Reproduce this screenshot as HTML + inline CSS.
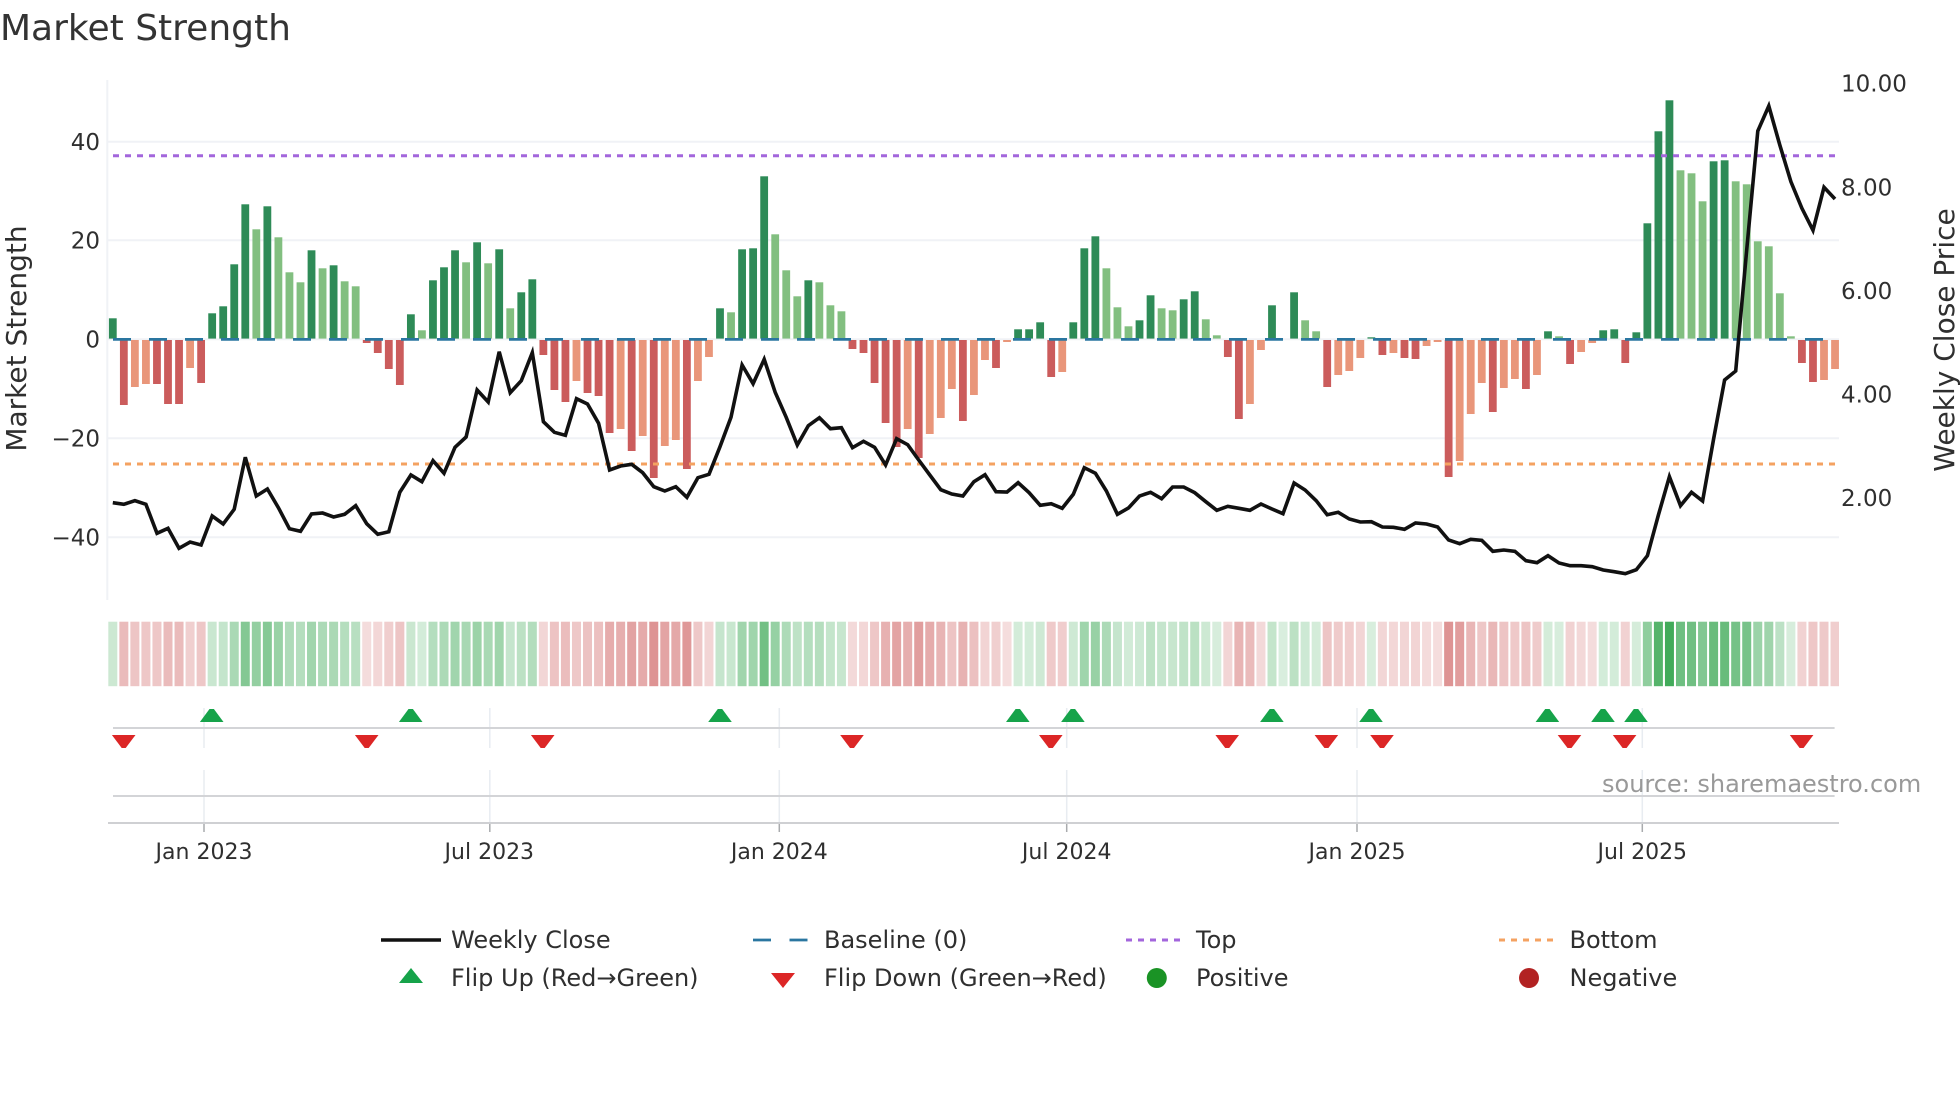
<!DOCTYPE html>
<html lang="en">
<head>
<meta charset="utf-8">
<title>Market Strength</title>
<style>
html,body{margin:0;padding:0;background:#fff;width:1960px;height:1102px;overflow:hidden}
svg{display:block}
text{font-family:"DejaVu Sans","Liberation Sans",sans-serif;fill:#2f2f2f}
.t{font-size:23px}
.l{font-size:24px}
</style>
</head>
<body>
<svg id="c" xmlns="http://www.w3.org/2000/svg" width="1960" height="1102" viewBox="0 0 1960 1102">
<rect width="1960" height="1102" fill="#fff"/>
<g stroke="#f0f2f6" stroke-width="2">
<line x1="107" x2="1839" y1="141.7" y2="141.7"/>
<line x1="107" x2="1839" y1="240.3" y2="240.3"/>
<line x1="107" x2="1839" y1="339.3" y2="339.3"/>
<line x1="107" x2="1839" y1="438.3" y2="438.3"/>
<line x1="107" x2="1839" y1="537.3" y2="537.3"/>
<line x1="107.3" x2="107.3" y1="80" y2="600"/>
</g>
<g id="heat"></g>
<g id="bars"></g>
<line x1="113" x2="1836" y1="155.7" y2="155.7" stroke="#a366dc" stroke-width="3" stroke-dasharray="6 6"/>
<line x1="113" x2="1836" y1="464" y2="464" stroke="#f4a261" stroke-width="3" stroke-dasharray="6 6"/>
<line x1="113" x2="1836" y1="339.4" y2="339.4" stroke="#2a76a0" stroke-width="2.8" stroke-dasharray="18 18"/>
<polyline id="close" fill="none" stroke="#111" stroke-width="3.6" stroke-linejoin="miter" stroke-miterlimit="4"/>

<g stroke="#e8ecf1" stroke-width="1.5" id="vg"></g>
<line x1="113" x2="1834.6" y1="728" y2="728" stroke="#d3d4d7" stroke-width="2"/>
<line x1="113" x2="1834.6" y1="796" y2="796" stroke="#d3d4d7" stroke-width="2"/>
<line x1="108" x2="1839" y1="823" y2="823" stroke="#cfd0d3" stroke-width="2"/>
<g id="tri"></g>

<text x="0" y="40" style="font-size:36px;fill:#333">Market Strength</text>
<text class="t" x="100" y="150" text-anchor="end">40</text>
<text class="t" x="100" y="248.5" text-anchor="end">20</text>
<text class="t" x="100" y="347.5" text-anchor="end">0</text>
<text class="t" x="100" y="446.5" text-anchor="end">−20</text>
<text class="t" x="100" y="545.5" text-anchor="end">−40</text>
<text class="t" x="1841" y="91.5">10.00</text>
<text class="t" x="1841" y="195.5">8.00</text>
<text class="t" x="1841" y="299">6.00</text>
<text class="t" x="1841" y="402.5">4.00</text>
<text class="t" x="1841" y="506">2.00</text>
<text transform="translate(26 338.5) rotate(-90)" text-anchor="middle" style="font-size:28px">Market Strength</text>
<text transform="translate(1954 340) rotate(-90)" text-anchor="middle" style="font-size:28px">Weekly Close Price</text>

<text class="t" x="204" y="859" text-anchor="middle" style="font-size:22px">Jan 2023</text>
<text class="t" x="489.3" y="859" text-anchor="middle" style="font-size:22px">Jul 2023</text>
<text class="t" x="779.3" y="859" text-anchor="middle" style="font-size:22px">Jan 2024</text>
<text class="t" x="1066.7" y="859" text-anchor="middle" style="font-size:22px">Jul 2024</text>
<text class="t" x="1357" y="859" text-anchor="middle" style="font-size:22px">Jan 2025</text>
<text class="t" x="1642.3" y="859" text-anchor="middle" style="font-size:22px">Jul 2025</text>

<text x="1602" y="792" style="font-size:24px;fill:#999">source: sharemaestro.com</text>

<line x1="381" x2="441" y1="940" y2="940" stroke="#111" stroke-width="3.6"/>
<text class="l" x="451" y="948">Weekly Close</text>
<line x1="753" x2="808" y1="940" y2="940" stroke="#2a76a0" stroke-width="2.8" stroke-dasharray="18 18.5"/>
<text class="l" x="824" y="948">Baseline (0)</text>
<line x1="1126" x2="1182" y1="940" y2="940" stroke="#a366dc" stroke-width="3" stroke-dasharray="6 6"/>
<text class="l" x="1196" y="948">Top</text>
<line x1="1499" x2="1555" y1="940" y2="940" stroke="#f4a261" stroke-width="3" stroke-dasharray="6 6"/>
<text class="l" x="1569.5" y="948">Bottom</text>
<polygon points="399,983 423,983 411,968" fill="#16a34a"/>
<text class="l" x="451" y="986">Flip Up (Red→Green)</text>
<polygon points="771,973 795,973 783,988" fill="#dc2626"/>
<text class="l" x="824" y="986">Flip Down (Green→Red)</text>
<circle cx="1156.8" cy="978" r="10" fill="#1a9325"/>
<text class="l" x="1196" y="986">Positive</text>
<circle cx="1529" cy="978" r="10" fill="#b22222"/>
<text class="l" x="1569.5" y="986">Negative</text>
</svg>
<script>
(function(){
var NS="http://www.w3.org/2000/svg";
function el(p,n,a){var e=document.createElementNS(NS,n);for(var k in a)e.setAttribute(k,a[k]);p.appendChild(e);return e}
var X0=112.8,S=11.04;
var toks=("21d -65d -47l -44l -44d -64d -64d -28l -43d 26d 33d 75d 135d 110l 133d 102l 67l 57l 89d 71l 74d 58l 53l -3d -13d -29d -45d 25d 9l 59d 72d 89d 77l 97d 76l 90d 31l 47d 60d -15d -50d -62d -41l -53d -56d -93d -89l -111d -96l -138d "+
"-106l -100l -129d -41l -17l 31d 27l 90d 91d 163d 105l 69l 43l 59d 57l 34l 28l -9d -13d -43d -83d -107d -89l -118d -94l -78l -49l -81d -55l -20l -28d -2l 10d 10d 17d -37d -32l 17d 91d 103d 71l 32l 13l 19d 44d 31l 29l 40d 48d 20l 4l -17d -79d -64l -10l 34d 0l 47d 19l "+
"8l -47d -35l -31l -18l 2d -15d -13l -18d -19d -6l -2l -137d -121l -74l -43l -72d -48l -39l -49d -35l 8d 3l -24d -12l -3l 9d 10d -23d 7d 116d 208d 239d 169l 166l 138l 178d 179d 158l 155l 98l 93l 46l 3l -23d -42d -40l -29l").split(" ");
var bars=document.getElementById("bars"),heat=document.getElementById("heat");
var col={pd:"#2e8b57",pl:"#82bf80",nd:"#cb5c5c",nl:"#e9967a"};
toks.forEach(function(t,i){
  var v=parseFloat(t),k=t.slice(-1),c=X0+S*i,pos=v>=0,h=Math.abs(v);
  var w=7.8,xx=c-w/2;
  if(xx<108)xx=108.8;
  if(h>0){
    if(pos)el(bars,"rect",{x:xx,y:338.6-h+0.7,width:w,height:h-0.7,fill:col["p"+k]});
    else el(bars,"rect",{x:xx,y:340,width:Math.min(w,1839-xx),height:h,fill:col["n"+k]});
  }
  var cx=c-4.5,cw=9;
  if(cx<108){cw-=108-cx;cx=108}
  if(cx+cw>1839)cw=1839-cx;
  var a=0.2+0.8*h/239;
  var f=pos?"rgba(66,171,90,"+a.toFixed(3)+")":"rgba(205,92,92,"+Math.min(a,.85).toFixed(3)+")";
  el(heat,"rect",{x:cx,y:621.7,width:cw,height:64.5,fill:f});
});
var a=[488,493,482,493,580,565,625,606,615,528,552,508,352,468,447,503,566,574,522,519,531,523,497,551,583,575,457,405,425,362,400,322,291,150,186,35,158,122,38,245,277,286,176,192,250,390,378,373,398,440,
453,440,472,413,403,320,232,75,131,58,157,232,315,257,233,266,263,323,304,322,375,296,314,360,405,449,462,468,425,404,455,456,428,458,496,491,505,463,383,400,453,523,504,468,457,476,441,441,458,485,511,499,505,511,492,507,521,429,450,
482,524,517,537,546,545,561,562,568,549,552,561,600,611,598,601,634,630,634,662,668,647,669,677,677,680,690,695,701,689,647,525,410,497,457,483,297,120,93];
var b=[600,243,168,285,395,475,541,412,447];
var pts=[];
a.forEach(function(z,i){pts.push((X0+S*i).toFixed(1)+","+(340+z/3).toFixed(1))});
b.forEach(function(z,j){pts.push((X0+S*(a.length+j)).toFixed(1)+","+(50+z/3).toFixed(1))});
document.getElementById("close").setAttribute("points",pts.join(" "));
var vg=document.getElementById("vg");
[204,489.8,779.3,1066.7,1357,1642.3].forEach(function(x){
  el(vg,"line",{x1:x,x2:x,y1:708,y2:748});
  el(vg,"line",{x1:x,x2:x,y1:770,y2:823});
  el(document.getElementById("c"),"line",{x1:x,x2:x,y1:824,y2:832,stroke:"#a9abae","stroke-width":1.5});
});
var tri=document.getElementById("tri");
[211.7,410.7,720,1017.8,1072.9,1271.9,1371,1547.4,1603,1636].forEach(function(x){
  el(tri,"polygon",{points:(x-11.8)+",722 "+(x+11.8)+",722 "+(x+2.2)+",709 "+(x-2.2)+",709",fill:"#16a34a"});
});
[123.7,366.7,542.7,852,1050.8,1227.2,1326.4,1382,1569.5,1624.6,1801.6].forEach(function(x){
  el(tri,"polygon",{points:(x-11.8)+",735 "+(x+11.8)+",735 "+(x+2)+",748 "+(x-2)+",748",fill:"#dc2626"});
});
})();
</script>
</body>
</html>
